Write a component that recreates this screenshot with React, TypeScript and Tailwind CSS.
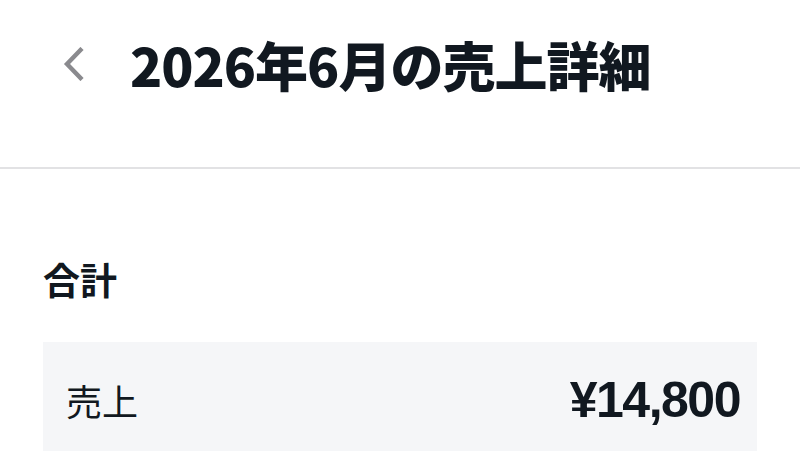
import React from 'react';

const jp = "font-['Noto_Sans_CJK_JP',sans-serif]";

const ChevronLeft = () => (
    <svg width="22" height="34" viewBox="0 0 22 34" fill="none">
        <path d="M18.5 3 L5 17 L18.5 31" stroke="#8a8a8e" strokeWidth="4.4" strokeLinecap="square" strokeLinejoin="miter" />
    </svg>
);

const App: React.FC = () => {
    return (
        <div className={`w-full min-h-[451px] bg-white text-[#111820] ${jp}`}>
            {/* Header */}
            <div className="h-[169px] border-b-2 border-[#e2e2e4]">
                <div className="h-[128px] flex items-center pl-[62px]">
                    <button className="flex items-center">
                        <ChevronLeft />
                    </button>
                    <h1 className="ml-[46px] text-[53px] font-black leading-none tracking-[-1px]">
                        2026年6月の売上詳細
                    </h1>
                </div>
            </div>

            {/* Total */}
            <div className="px-[43px] pt-[92px]">
                <h2 className="text-[37px] font-bold leading-none">合計</h2>
                <div className="mt-[44px] h-[116px] bg-[#f5f6f8] flex items-center justify-between pl-[23px] pr-[17px]">
                    <span className="text-[36px] leading-none">売上</span>
                    <span className="font-['Liberation_Sans',sans-serif] text-[50px] font-bold leading-none tracking-[-1.5px]">
                        ¥14,800
                    </span>
                </div>
            </div>
        </div>
    );
};

export default App;
